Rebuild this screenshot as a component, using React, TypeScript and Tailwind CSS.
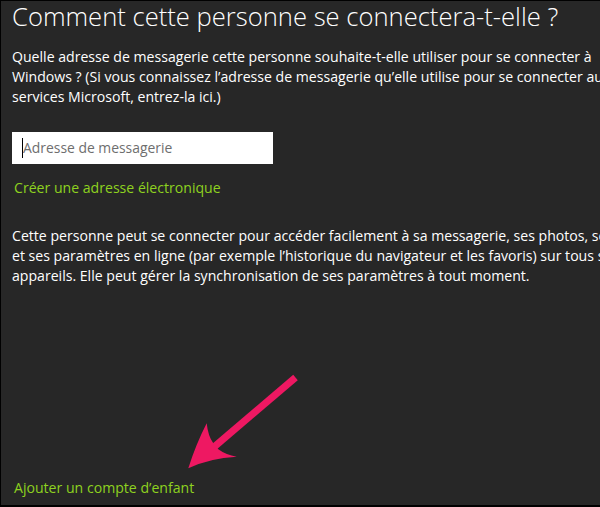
import React from "react";

export default function App() {
  const font = { fontFamily: '"Open Sans", "Noto Sans", sans-serif' };
  return (
    <div
      className="relative w-[600px] h-[507px] overflow-hidden bg-[#272727] border-l border-t border-b-2 border-black text-white"
      style={font}
    >
      <div className="pl-[11px]">
        <h1 className="mt-[-2px] text-[25.6px] leading-[36px] font-light whitespace-nowrap text-white">
          Comment cette personne se connectera-t-elle ?
        </h1>
        <div className="mt-[12px] text-[14.1px] leading-[20px] whitespace-nowrap">
          <div>Quelle adresse de messagerie cette personne souhaite-t-elle utiliser pour se connecter à</div>
          <div>Windows ? (Si vous connaissez l’adresse de messagerie qu’elle utilise pour se connecter aux</div>
          <div>services Microsoft, entrez-la ici.)</div>
        </div>
        <div className="mt-[25px] w-[261px] h-[32px] bg-white flex items-center pl-[10px]">
          <span className="w-px h-[20px] bg-black" />
          <span className="text-[13.9px] text-[#6e6e6e] leading-[20px]">Adresse de messagerie</span>
        </div>
        <div className="mt-[14px] pl-[2px] text-[14.1px] leading-[20px] text-[#8ed21f]">
          Créer une adresse électronique
        </div>
        <div className="mt-[28px] text-[14.1px] leading-[20px] whitespace-nowrap">
          <div>Cette personne peut se connecter pour accéder facilement à sa messagerie, ses photos, ses fichiers</div>
          <div>et ses paramètres en ligne (par exemple l’historique du navigateur et les favoris) sur tous ses</div>
          <div>appareils. Elle peut gérer la synchronisation de ses paramètres à tout moment.</div>
        </div>
        <div className="mt-[192px] pl-[2px] text-[14.1px] leading-[20px] text-[#8ed21f]">
          Ajouter un compte d’enfant
        </div>
      </div>
      <svg className="absolute left-[-1px] top-[-1px]" width="600" height="507" viewBox="0 0 600 507">
        <line x1="295.5" y1="377.5" x2="214" y2="447" stroke="#ee1862" strokeWidth="7" />
        <path
          d="M206.7,423.3 Q208,436 213.3,443.3 L218.3,449.3 Q226,455 236.7,456.7 Q210,458 188.3,468.3 Q196,444 206.7,423.3 Z"
          fill="#ee1862"
        />
      </svg>
    </div>
  );
}
